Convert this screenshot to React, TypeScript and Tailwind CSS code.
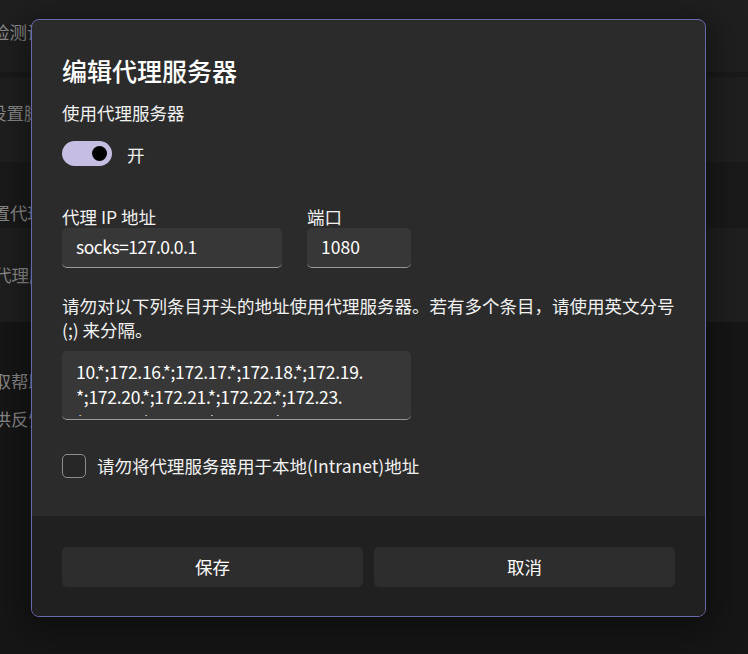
export default function App() {
  return (
    <div className="relative w-[748px] h-[654px] overflow-hidden bg-[#161616] font-['Noto_Sans_CJK_SC','Noto_Sans',sans-serif] text-[17.5px]">
      {/* dimmed settings page behind */}
      <div className="flex flex-col text-[#8a8a8a] whitespace-nowrap">
        <div className="bg-[#1a1a1a] flex flex-col">
          <div className="h-[72px] bg-[#1f1f1f] flex items-center pb-[8px]">
            <span className="ml-[-43px] leading-[24px]">自动检测设置</span>
          </div>
          <div className="h-[5px]" />
          <div className="h-[85px] bg-[#1f1f1f] flex items-center pb-[13px]">
            <span className="ml-[-46px] leading-[24px]">使用设置脚本</span>
          </div>
          <div className="h-[66px] flex items-end pb-[3px]">
            <span className="ml-[-60px] leading-[24px]">手动设置代理</span>
          </div>
          <div className="h-[94px] bg-[#1f1f1f] flex items-center">
            <span className="ml-[-41px] leading-[24px]">使用代理服务器</span>
          </div>
        </div>
        <div className="flex flex-col pt-[47px] gap-[14px]">
          <span className="ml-[-24px] leading-[24px]">获取帮助</span>
          <span className="ml-[-24px] leading-[24px]">提供反馈</span>
        </div>
      </div>

      {/* dialog */}
      <div className="absolute left-[31px] top-[19px] w-[675px] h-[598px] border border-[#6868ac] rounded-[8px] overflow-hidden flex flex-col bg-[#2b2b2b] shadow-[0_8px_32px_10px_rgba(0,0,0,0.35)]">
        <div className="flex-1 px-[30px] pt-[33px] flex flex-col text-[#f2f2f2]">
          <div className="text-[25px] leading-[34px] font-medium text-white">编辑代理服务器</div>
          <div className="mt-[13px] leading-[25px]">使用代理服务器</div>
          <div className="mt-[16px] flex items-center h-[25px]">
            <div className="w-[50px] h-[25px] rounded-full bg-[#c5bde2] flex items-center justify-end pr-[5px]">
              <div className="w-[15px] h-[15px] rounded-full bg-black" />
            </div>
            <span className="ml-[15px] leading-[25px] mt-[2px]">开</span>
          </div>

          <div className="mt-[40px] flex gap-[25px]">
            <div className="flex flex-col w-[220px]">
              <div className="leading-[22px]">代理 IP 地址</div>
              <div className="h-[40px] rounded-[5px] bg-[#373737] border-b border-[#9a9a9a] flex items-center pl-[14px] text-white tracking-[-0.5px]">
                socks=127.0.0.1
              </div>
            </div>
            <div className="flex flex-col w-[104px]">
              <div className="leading-[22px]">端口</div>
              <div className="h-[40px] rounded-[5px] bg-[#373737] border-b border-[#9a9a9a] flex items-center pl-[14px] text-white">
                1080
              </div>
            </div>
          </div>

          <div className="mt-[26px] leading-[24px] whitespace-nowrap">
            请勿对以下列条目开头的地址使用代理服务器。若有多个条目，请使用英文分号
            <br />
            (;) 来分隔。
          </div>

          <div className="mt-[9px] w-[349px] h-[69px] rounded-[5px] bg-[#373737] border-b border-[#9a9a9a] pl-[14px] pt-[8px] text-white">
            <div className="h-[57px] overflow-hidden leading-[25px] whitespace-nowrap tracking-[-0.3px]">
              <div>10.*;172.16.*;172.17.*;172.18.*;172.19.</div>
              <div>*;172.20.*;172.21.*;172.22.*;172.23.</div>
              <div>*;172.24.*;172.25.*;172.26.*;172.27.</div>
            </div>
          </div>

          <div className="mt-[34px] flex items-center h-[24px]">
            <div className="w-[24px] h-[24px] rounded-[5px] border border-[#8c8c8c] bg-[#272727]" />
            <span className="ml-[11px] leading-[24px]">请勿将代理服务器用于本地(Intranet)地址</span>
          </div>
        </div>

        <div className="h-[100px] bg-[#202020] px-[30px] pt-[31px] grid grid-cols-2 gap-[11px] items-start">
          <div className="h-[40px] rounded-[5px] bg-[#2d2d2d] flex items-center justify-center text-white">保存</div>
          <div className="h-[40px] rounded-[5px] bg-[#2d2d2d] flex items-center justify-center text-white">取消</div>
        </div>
      </div>
    </div>
  );
}
